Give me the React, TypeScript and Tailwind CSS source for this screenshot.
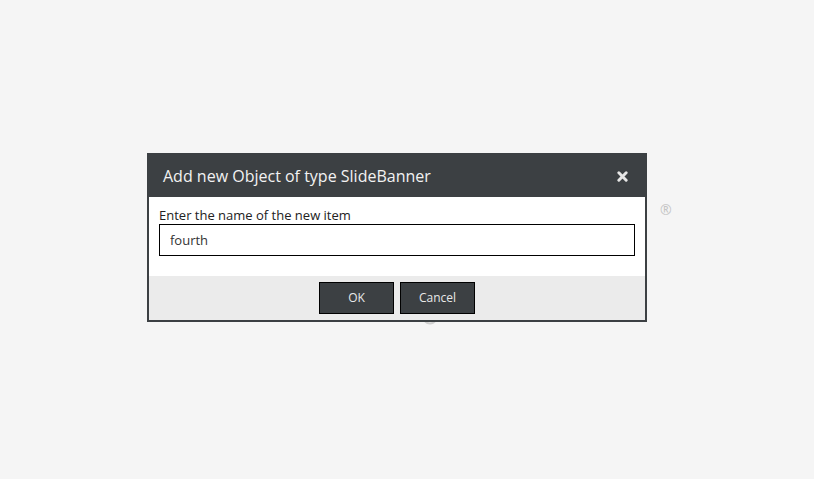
import { useState } from "react";

const NewItemDialog = () => {
  const [name, setName] = useState("fourth");

  return (
    <div className="w-[500px] border-2 border-[#3c4043] bg-white">
      {/* Header */}
      <div className="flex h-[42px] items-center justify-between bg-[#3c4043] pl-[14px] pr-[17px]">
        <h1 className="text-[16px] text-[#f2f2f2]">
          Add new Object of type SlideBanner
        </h1>
        <button className="text-[#e6e6e6]" aria-label="close">
          <svg width="11" height="11" viewBox="0 0 12 12">
            <path
              d="M2 2 L10 10 M10 2 L2 10"
              stroke="currentColor"
              strokeWidth="3.2"
              strokeLinecap="round"
            />
          </svg>
        </button>
      </div>

      {/* Body */}
      <div className="flex flex-col px-[10px] pb-[20px] pt-[10px]">
        <label className="text-[13px] leading-[17px] text-[#222]">
          Enter the name of the new item
        </label>
        <input
          type="text"
          value={name}
          onChange={(e) => setName(e.target.value)}
          className="h-[32px] w-full border border-black px-[10px] text-[13px] text-[#333] outline-none"
        />
      </div>

      {/* Footer */}
      <div className="flex justify-center gap-[6px] bg-[#ebebeb] py-[6px]">
        <button className="h-[32px] w-[75px] border border-black bg-[#3c4043] text-[12px] text-[#e8e8e8]">
          OK
        </button>
        <button className="h-[32px] w-[75px] border border-black bg-[#3c4043] text-[12px] text-[#e8e8e8]">
          Cancel
        </button>
      </div>
    </div>
  );
};

const App = () => {
  return (
    <div
      className="relative h-[479px] w-full overflow-hidden bg-[#f5f5f5]"
      style={{ fontFamily: '"Open Sans", "Liberation Sans", sans-serif' }}
    >
      {/* faint logo behind the dialog */}
      <span className="absolute left-[660px] top-[199px] text-[14px] text-[#c4c4c4]">
        ®
      </span>
      <svg
        className="absolute left-[420px] top-[314px]"
        width="20"
        height="14"
        viewBox="0 0 20 14"
      >
        <path
          d="M4 6 Q10 13 16 6"
          stroke="#cfcfcf"
          strokeWidth="2"
          fill="none"
        />
      </svg>

      <div className="relative pl-[147px] pt-[153px]">
        <NewItemDialog />
      </div>
    </div>
  );
};

export default App;
